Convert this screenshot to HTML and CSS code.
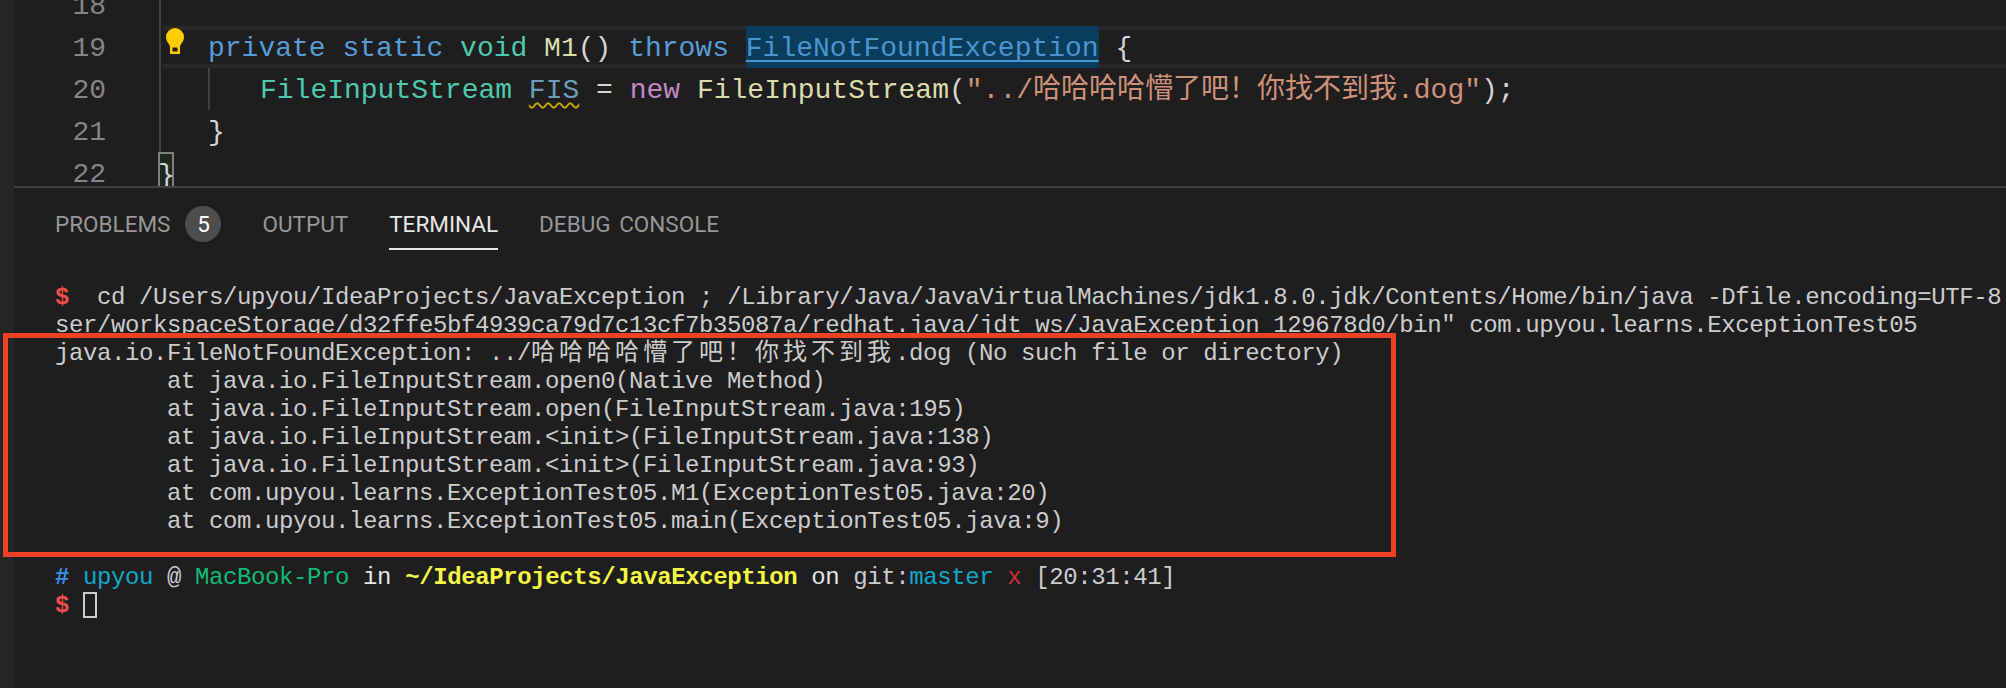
FILE: index.html
```html
<!DOCTYPE html>
<html lang="en">
<head>
<meta charset="utf-8">
<title>JavaException</title>
<link rel="stylesheet" href="styles.css">
</head>
<body>
<div class="window">
  <div class="strip"></div>
  <div class="main">
    <section class="editor">
      <div class="lines">
        <div class="line"><span class="num">18</span><div class="code"></div></div>
        <div class="line"><span class="num">19</span><div class="code current"><svg class="bulb" width="18" height="26" viewBox="0 0 18 26"><path fill="#ffcc00" fill-rule="evenodd" d="M9 0a9 9 0 0 1 9 9c0 3.200-1.500 5-2.700 6.700-.9 1.300-1.300 2.300-1.300 3.300v7H4v-7c0-1-.4-2-1.300-3.300C1.500 14 0 12.200 0 9a9 9 0 0 1 9-9zM6.500 19.500v4h5v-4z"/></svg><span class="kw">private</span> <span class="kw">static</span> <span class="ty">void</span> <span class="fn">M1</span>() <span class="kw">throws</span> <span class="hit">FileNotFoundException</span> {</div></div>
        <div class="line"><span class="num">20</span><div class="code"><div class="guide"><span class="ty">FileInputStream</span> <span class="var">FIS</span> = <span class="new">new</span> <span class="fn">FileInputStream</span>(<span class="str">"../哈哈哈哈懵了吧！你找不到我.dog"</span>);</div></div></div>
        <div class="line"><span class="num">21</span><div class="code"><span class="indent">}</span></div></div>
        <div class="line"><span class="num">22</span><div class="code"><span class="match">}</span></div></div>
      </div>
    </section>
    <section class="panel">
      <nav class="tabs">
        <span class="tab">PROBLEMS<span class="badge">5</span></span>
        <span class="tab">OUTPUT</span>
        <span class="tab active">TERMINAL</span>
        <span class="tab">DEBUG CONSOLE</span>
      </nav>
      <div class="terminal">
        <div class="row"><span class="err">$</span>  cd /Users/upyou/IdeaProjects/JavaException ; /Library/Java/JavaVirtualMachines/jdk1.8.0.jdk/Contents/Home/bin/java -Dfile.encoding=UTF-8</div>
        <div class="row">ser/workspaceStorage/d32ffe5bf4939ca79d7c13cf7b35087a/redhat.java/jdt_ws/JavaException_129678d0/bin" com.upyou.learns.ExceptionTest05</div>
        <div class="row">java.io.FileNotFoundException: ../<span class="cjk">哈哈哈哈懵了吧！你找不到我</span>.dog (No such file or directory)</div>
        <div class="row">        at java.io.FileInputStream.open0(Native Method)</div>
        <div class="row">        at java.io.FileInputStream.open(FileInputStream.java:195)</div>
        <div class="row">        at java.io.FileInputStream.&lt;init&gt;(FileInputStream.java:138)</div>
        <div class="row">        at java.io.FileInputStream.&lt;init&gt;(FileInputStream.java:93)</div>
        <div class="row">        at com.upyou.learns.ExceptionTest05.M1(ExceptionTest05.java:20)</div>
        <div class="row">        at com.upyou.learns.ExceptionTest05.main(ExceptionTest05.java:9)</div>
        <div class="row"></div>
        <div class="row"><span class="hash">#</span> <span class="cyan">upyou</span> @ <span class="green">MacBook-Pro</span> <span class="white">in</span> <span class="path">~/IdeaProjects/JavaException</span> <span class="white">on</span> git:<span class="cyan">master</span> <span class="dirty">x</span> [20:31:41]</div>
        <div class="row"><span class="err">$</span> <span class="cursor"></span></div>
      </div>
    </section>
  </div>
  <div class="callout"></div>
</div>
</body>
</html>
```

FILE: styles.css
```css
* { box-sizing: border-box; }
html, body { margin: 0; height: 100%; background: #1e1e1e; }
.window { position: relative; display: flex; height: 688px; overflow: hidden; background: #1e1e1e; }
.strip { width: 14px; flex: none; background: #252526; }
.main { flex: 1; display: flex; flex-direction: column; min-width: 0; }

/* editor */
.editor { height: 188px; flex: none; overflow: hidden; border-bottom: 2px solid #414141; }
.lines {
  margin-top: -16px;
  font: 28px/46px "Liberation Mono", "Noto Sans CJK SC", monospace;
  color: #d4d4d4;
}
.line { display: flex; height: 42px; white-space: pre; }
.num { width: 92px; flex: none; margin-right: 52px; text-align: right; color: #858585; }
.code { flex: 1; position: relative; height: 42px; border-left: 2px solid #404040; margin-left: 1px; }
.current {
  padding-left: 47px;
  padding-top: 4px;
  line-height: 38px;
  background: linear-gradient(#282828, #282828) 2px 0 / 100% 4px no-repeat,
              linear-gradient(#282828, #282828) 2px 100% / 100% 4px no-repeat;
}
.bulb { position: absolute; left: 5px; top: 2px; }
.kw { color: #569cd6; }
.ty { color: #4ec9b0; }
.fn { color: #dcdcaa; }
.new { color: #c586c0; }
.str { color: #ce9178; }
.hit {
  display: inline-block;
  height: 42px;
  margin-top: -4px;
  line-height: 46px;
  vertical-align: top;
  background: #0a3d5c;
  color: #4a94d0;
  text-decoration: underline 2px #4a94d0;
  text-decoration-skip-ink: none;
  text-underline-offset: 4px;
}
.var {
  color: #6c9db8;
  text-decoration: underline wavy #cca700 2px;
  text-decoration-skip-ink: none;
  text-underline-offset: 4px;
}
.guide { margin-left: 47px; padding-left: 50px; height: 42px; border-left: 2px solid #404040; }
.indent { margin-left: 47px; }
.match {
  display: inline-block;
  margin-left: -3px;
  width: 16px;
  height: 34px;
  line-height: 44px;
  vertical-align: top;
  border: 2px solid #7f7f7f;
  border-bottom: 0;
  background: #1a2a20;
  text-indent: -2px;
  overflow: hidden;
}

/* panel */
.tabs {
  display: flex;
  align-items: center;
  gap: 41px;
  height: 72px;
  padding-left: 41px;
  font: 22.5px/36px "Roboto", "Liberation Sans", sans-serif;
  word-spacing: 3px;
  color: #979797;
}
.tab { position: relative; display: flex; align-items: center; height: 36px; }
.active { color: #e7e7e7; }
.active::after {
  content: "";
  position: absolute;
  left: 0; right: 0; bottom: -8px;
  height: 2px;
  background: #e7e7e7;
}
.badge {
  width: 36px; height: 36px;
  margin-left: 15px;
  border-radius: 50%;
  background: #4d4d4d;
  color: #fff;
  text-align: center;
}

/* terminal */
.terminal {
  padding: 24px 0 0 41px;
  font: 24px/28px "Liberation Mono", "Noto Sans CJK SC", monospace;
  letter-spacing: -0.4px;
  color: #cccccc;
}
.row { height: 28px; white-space: pre; }
.cjk { letter-spacing: 4px; }
.err { color: #f14c4c; font-weight: 700; }
.hash { color: #3b8eea; font-weight: 700; }
.cyan { color: #11a8cd; }
.green { color: #0dbc79; }
.white { color: #e5e5e5; }
.path { color: #f5f543; font-weight: 700; }
.dirty { color: #cd3131; }
.cursor {
  display: inline-block;
  width: 14px; height: 26px;
  vertical-align: top;
  margin-top: 0;
  border: 2px solid #cccccc;
}

/* red annotation drawn over the screenshot */
.callout {
  position: absolute;
  left: 3px; top: 333px;
  width: 1393px; height: 224px;
  border: 5px solid #ee4023;
}
```
